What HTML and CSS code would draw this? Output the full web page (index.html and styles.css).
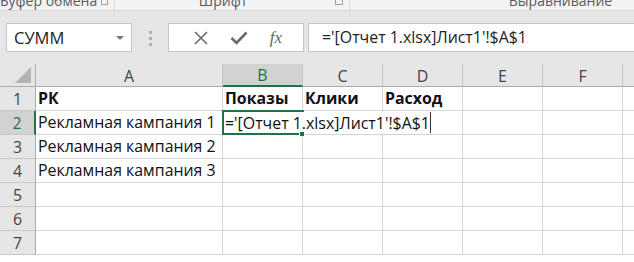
FILE: index.html
```html
<!DOCTYPE html>
<html lang="ru">
<head>
    <meta charset="UTF-8">
    <title>Excel</title>
    <link rel="stylesheet" href="styles.css">
</head>
<body>
    <div class="ribbon">
        <div class="group g1"><span class="group-label">Буфер обмена</span><span class="launcher"></span></div>
        <div class="group g2"><span class="group-label">Шрифт</span><span class="launcher"></span></div>
        <div class="group g3"><span class="group-label">Выравнивание</span><span class="launcher"></span></div>
    </div>

    <div class="formula-bar">
        <div class="name-box">
            <span>СУММ</span>
            <span class="dropdown"></span>
        </div>
        <div class="grip"><i></i><i></i><i></i></div>
        <div class="fx-buttons">
            <svg class="ico" width="14" height="14" viewBox="0 0 14 14"><path d="M1 1 L13 13 M13 1 L1 13" stroke="#6a6a6a" stroke-width="1.6" fill="none"/></svg>
            <svg class="ico" width="18" height="14" viewBox="0 0 18 14"><path d="M1.5 7 L6.5 12 L16.5 1.5" stroke="#6a6a6a" stroke-width="2.6" fill="none"/></svg>
            <span class="fx">fx</span>
        </div>
        <div class="formula-input">='[Отчет 1.xlsx]Лист1'!$A$1</div>
    </div>

    <div class="sheet">
        <div class="hd corner"><span class="tri"></span></div>
        <div class="hd col">A</div>
        <div class="hd col active">B</div>
        <div class="hd col">C</div>
        <div class="hd col">D</div>
        <div class="hd col">E</div>
        <div class="hd col">F</div>
        <div class="hd col"></div>

        <div class="hd row">1</div>
        <div class="cell bold">РК</div>
        <div class="cell bold">Показы</div>
        <div class="cell bold">Клики</div>
        <div class="cell bold">Расход</div>
        <div class="cell"></div>
        <div class="cell"></div>
        <div class="cell"></div>

        <div class="hd row active">2</div>
        <div class="cell">Рекламная кампания 1</div>
        <div class="cell current">
            <div class="selection"></div>
            <div class="edit">='[Отчет 1.xlsx]Лист1'!$A$1</div>
            <div class="handle"></div>
        </div>
        <div class="cell"></div>
        <div class="cell"></div>
        <div class="cell"></div>
        <div class="cell"></div>
        <div class="cell"></div>

        <div class="hd row">3</div>
        <div class="cell">Рекламная кампания 2</div>
        <div class="cell"></div>
        <div class="cell"></div>
        <div class="cell"></div>
        <div class="cell"></div>
        <div class="cell"></div>
        <div class="cell"></div>

        <div class="hd row">4</div>
        <div class="cell">Рекламная кампания 3</div>
        <div class="cell"></div>
        <div class="cell"></div>
        <div class="cell"></div>
        <div class="cell"></div>
        <div class="cell"></div>
        <div class="cell"></div>

        <div class="hd row">5</div>
        <div class="cell"></div>
        <div class="cell"></div>
        <div class="cell"></div>
        <div class="cell"></div>
        <div class="cell"></div>
        <div class="cell"></div>
        <div class="cell"></div>

        <div class="hd row">6</div>
        <div class="cell"></div>
        <div class="cell"></div>
        <div class="cell"></div>
        <div class="cell"></div>
        <div class="cell"></div>
        <div class="cell"></div>
        <div class="cell"></div>

        <div class="hd row">7</div>
        <div class="cell"></div>
        <div class="cell"></div>
        <div class="cell"></div>
        <div class="cell"></div>
        <div class="cell"></div>
        <div class="cell"></div>
        <div class="cell"></div>
    </div>
</body>
</html>
```

FILE: styles.css
```css
* { box-sizing: border-box; }
body { margin: 0; width: 634px; height: 262px; overflow: hidden; background: #fff; font-family: "Open Sans", "Noto Sans", sans-serif; }

/* ribbon group captions, cut off at the top */
.ribbon { display: flex; height: 11px; overflow: hidden; background: #f3f3f3; border-bottom: 1px solid #d8d8d8; }
.group { display: flex; flex: none; align-items: flex-end; border-right: 1px solid #d8d8d8; height: 10px; }
.g1 { width: 115px; padding-right: 6px; }
.g2 { width: 235px; padding-right: 6px; }
.g3 { width: 440px; padding-right: 6px; }
.group-label { flex: 1; text-align: center; font-size: 14px; line-height: 14px; color: #5a5a5a; margin-bottom: 2px; white-space: nowrap; }
.launcher { width: 8px; height: 5px; margin-left: 4px; margin-bottom: 5px; border: 1px solid #a0a0a0; border-top: none; }

/* formula bar */
.formula-bar { display: flex; align-items: flex-start; height: 53px; padding-top: 12px; background: #e6e6e6; }
.name-box { display: flex; align-items: center; justify-content: space-between; width: 126px; height: 29px; margin-left: 6px; padding: 0 7px 0 7px; background: #fff; border: 1px solid #c6c6c6; font-size: 16.5px; color: #222; }
.dropdown { width: 0; height: 0; border-left: 4px solid transparent; border-right: 4px solid transparent; border-top: 4px solid #777; }
.grip { display: flex; flex-direction: column; gap: 3px; width: 3px; margin: 8px 16px 0 17px; }
.grip i { display: block; width: 3px; height: 3px; background: #b0b0b0; }
.fx-buttons { display: flex; align-items: center; justify-content: space-around; width: 136px; height: 29px; padding: 0 10px 0 14px; background: #fff; border: 1px solid #c6c6c6; }
.fx { font-family: "Liberation Serif", serif; font-style: italic; font-size: 17px; color: #666; }
.formula-input { flex: 1; height: 29px; margin-left: 4px; padding-left: 13px; background: #fff; border: 1px solid #c6c6c6; border-right: none; font-size: 15.9px; line-height: 27px; color: #222; white-space: nowrap; }

/* sheet grid */
.sheet { display: grid; grid-template-columns: 36px 187px repeat(6, 80px); grid-template-rows: 23px repeat(7, 24px) 30px; font-size: 15.9px; color: #111; }
.hd { display: flex; align-items: center; justify-content: center; background: #e6e6e6; color: #444; }
.hd.col { border-right: 1px solid #c4c4c4; border-bottom: 1px solid #ababab; padding-top: 1px; }
.hd.row { border-right: 1px solid #ababab; border-bottom: 1px solid #c8c8c8; }
.hd.active { background: #d2d2d2; color: #217346; }
.hd.col.active { border-bottom: 2px solid #217346; }
.hd.row.active { border-right: 2px solid #217346; }
.corner { position: relative; border-right: 1px solid #ababab; border-bottom: 1px solid #ababab; }
.tri { position: absolute; right: 4px; bottom: 3px; width: 0; height: 0; border-left: 16px solid transparent; border-bottom: 16px solid #b4b4b4; }
.cell { display: flex; align-items: flex-end; padding: 0 0 1px 2px; border-right: 1px solid #d4d4d4; border-bottom: 1px solid #d4d4d4; white-space: nowrap; }
.bold { font-weight: bold; }

/* active cell in edit mode */
.current { position: relative; }
.selection { position: absolute; left: -1px; top: -1px; width: 82px; height: 25px; border: 2px solid #217346; }
.edit { position: absolute; left: 1px; top: 1px; z-index: 2; height: 21px; padding: 0 0 0 1px; background: #fff; border-right: 1px solid #333; line-height: 22px; }
.handle { position: absolute; right: -3px; bottom: -3px; z-index: 3; width: 6px; height: 6px; background: #217346; border: 1px solid #fff; }
```
